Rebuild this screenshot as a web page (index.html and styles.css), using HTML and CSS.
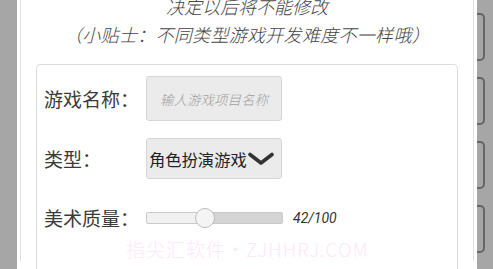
FILE: index.html
```html
<!DOCTYPE html>
<html lang="zh-CN">
<head>
<meta charset="utf-8">
<title>新建游戏</title>
<link rel="stylesheet" href="styles.css">
</head>
<body>
<div class="screen">
  <div class="side side-left"></div>
  <div class="dialog">
    <div class="inner">
      <div class="header">
        <div class="h1">决定以后将不能修改</div>
        <div class="h2">（小贴士：不同类型游戏开发难度不一样哦）</div>
      </div>
      <div class="card">
        <div class="row row-name">
          <div class="label">游戏名称：</div>
          <div class="input"><span class="placeholder">输人游戏项目名称</span></div>
        </div>
        <div class="row row-type">
          <div class="label">类型：</div>
          <div class="select">
            <span class="select-text">角色扮演游戏</span>
            <svg class="chevron" width="28" height="16" viewBox="0 0 28 16"><path d="M3 3.5 L14 12 L25 3.5" fill="none" stroke="#333" stroke-width="3.6" stroke-linecap="round" stroke-linejoin="round"/></svg>
          </div>
        </div>
        <div class="row row-slider">
          <div class="label">美术质量：</div>
          <div class="slider">
            <div class="track"><div class="fill" style="width:42%"></div></div>
            <div class="thumb" style="left:calc(42% * 117 / 137)"></div>
          </div>
          <div class="value">42/100</div>
        </div>
        <div class="row row-slider row-last">
          <div class="label">游戏性：</div>
          <div class="slider">
            <div class="track"><div class="fill" style="width:25%"></div></div>
            <div class="thumb" style="left:calc(25% * 117 / 137)"></div>
          </div>
          <div class="value">25/100</div>
        </div>
        <div class="watermark">指尖汇软件・ZJHHRJ.COM</div>
      </div>
    </div>
  </div>
  <div class="side side-right">
    <div class="tab"></div>
    <div class="tab"></div>
    <div class="tab"></div>
    <div class="tab"></div>
    <div class="tab"></div>
  </div>
</div>
</body>
</html>
```

FILE: styles.css
```css
html, body {
  margin: 0;
  padding: 0;
  height: 269px;
  overflow: hidden;
  background: #a6a6a6;
  font-family: "Noto Sans CJK SC", "Noto Sans", sans-serif;
}
.screen {
  display: flex;
  width: 493px;
  height: 269px;
  overflow: hidden;
}
.side {
  background: #a6a6a6;
}
.side-left {
  width: 17px;
  flex: none;
}
.side-right {
  width: 16px;
  flex: none;
  display: flex;
  flex-direction: column;
  gap: 16px;
  padding-top: 13px;
  box-sizing: border-box;
}
.tab {
  width: 6px;
  height: 44px;
  flex: none;
  border: 2px solid #666;
  border-left: none;
  border-radius: 0 5px 5px 0;
}
.dialog {
  width: 460px;
  flex: none;
  background: #fff;
  padding: 0 3px 0 3px;
  box-sizing: border-box;
}
.inner {
  height: 100%;
  border-left: 1px solid #e0e0e0;
  border-right: 1px solid #e0e0e0;
  box-sizing: border-box;
  padding: 0 15px;
}
.header {
  margin-top: -8px;
  text-align: center;
  color: #444;
  font-style: italic;
  font-weight: 300;
  line-height: 28px;
}
.h1 { font-size: 18px; }
.h2 { font-size: 18px; letter-spacing: 0.3px; }
.card {
  position: relative;
  margin-top: 16px;
  border: 1.5px solid #dcdcdc;
  border-radius: 4px;
  padding: 11px 7px 0 7px;
  height: 260px;
  box-sizing: border-box;
}
.row {
  display: flex;
  align-items: center;
}
.row-name { height: 45px; }
.row-type { height: 41px; margin-top: 17px; }
.row-slider { height: 41px; margin-top: 18px; }
.row-last { margin-top: 20px; }
.label {
  width: 102px;
  flex: none;
  font-size: 19px;
  font-weight: 400;
  color: #3a3a3a;
}
.input {
  width: 136px;
  height: 45px;
  box-sizing: border-box;
  background: #ebebeb;
  border: 1px solid #d6d6d6;
  border-radius: 3px;
  display: flex;
  align-items: center;
  justify-content: center;
}
.placeholder {
  font-size: 13.5px;
  font-style: italic;
  font-weight: 300;
  color: #a0a0a0;
}
.select {
  width: 136px;
  height: 41px;
  box-sizing: border-box;
  background: #ebebeb;
  border: 1px solid #d6d6d6;
  border-radius: 3px;
  display: flex;
  align-items: center;
  padding-left: 2px;
}
.select-text {
  font-size: 16.3px;
  font-weight: 400;
  color: #222;
}
.chevron {
  margin-left: 0;
  filter: blur(0.5px);
}
.slider {
  position: relative;
  width: 137px;
  height: 20px;
  flex: none;
  display: flex;
  align-items: center;
}
.track {
  width: 100%;
  height: 12px;
  box-sizing: border-box;
  border: 1px solid #c9c9c9;
  border-radius: 2px;
  background: #d4d4d4;
  overflow: hidden;
}
.fill {
  height: 100%;
  background: #f1f1f1;
}
.thumb {
  position: absolute;
  top: 0;
  width: 20px;
  height: 20px;
  box-sizing: border-box;
  border-radius: 50%;
  background: #f4f4f4;
  border: 1px solid #bdbdbd;
}
.value {
  margin-left: 10px;
  font-family: Roboto, "Liberation Sans", sans-serif;
  font-style: italic;
  font-size: 14px;
  color: #333;
}
.watermark {
  position: absolute;
  left: 89px;
  top: 170px;
  font-family: "Noto Sans CJK SC", sans-serif;
  font-weight: 300;
  font-size: 19px;
  letter-spacing: 1px;
  color: #fde8f6;
  white-space: nowrap;
}
```
